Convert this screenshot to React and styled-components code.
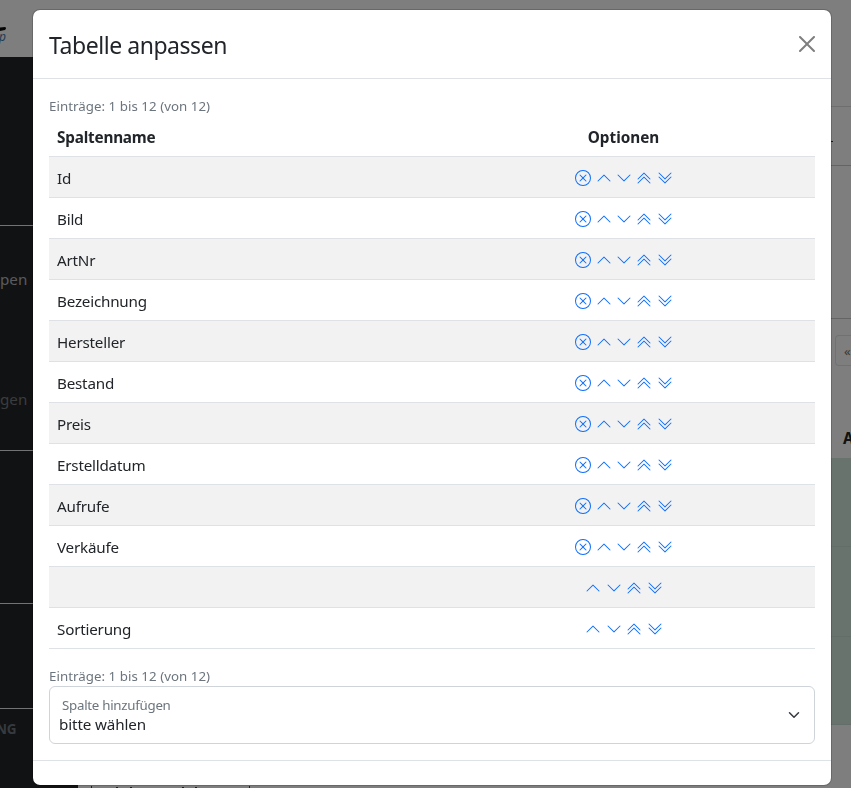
import React from 'react';
import styled, { createGlobalStyle } from 'styled-components';
import {
    BsXCircle,
    BsChevronUp,
    BsChevronDown,
    BsChevronDoubleUp,
    BsChevronDoubleDown,
} from 'react-icons/bs';

const Global = createGlobalStyle`
    *, *::before, *::after {
        box-sizing: border-box;
    }
    body {
        margin: 0;
        overflow: hidden;
        background: #fff;
        font-family: 'Noto Sans', 'Open Sans', sans-serif;
        font-size: 16px;
        line-height: 1.5;
        color: #212529;
    }
`;

/* ---- page behind the dialog ---- */

const Page = styled.div`
    display: flex;
    flex-direction: column;
    height: 788px;
    overflow: hidden;
`

const TopBar = styled.header`
    display: flex;
    height: 57px;
    padding-top: 26px;
    flex: none;
    background: #fcfcfe;
`

const Logo = styled.svg`
    width: 8px;
    height: 20px;
`

const Columns = styled.div`
    display: flex;
    flex: 1;
    min-height: 0;
`

const Sidebar = styled.nav`
    display: flex;
    flex-direction: column;
    width: 78px;
    flex: none;
    background: #222427;
`

const NavGroup = styled.div`
    height: ${props => props.$height}px;
    flex: none;
    padding-top: ${props => props.$top || 0}px;
    border-bottom: 1px solid ${props => props.$last ? 'transparent' : '#e3e6e9'};
`

const NavText = styled.div`
    height: 24px;
    margin-bottom: 96px;
    margin-left: ${props => props.$small ? -4 : 0}px;
    white-space: nowrap;
    font-size: ${props => props.$small ? 13.5 : 15.2}px;
    font-weight: ${props => props.$small ? 700 : 400};
    letter-spacing: ${props => props.$small ? -0.3 : 0}px;
    color: ${props => props.$color};
`

const Main = styled.main`
    display: flex;
    flex-direction: column;
    flex: 1;
    min-width: 0;
    background: #fcfcfd;
`

const Band = styled.div`
    display: flex;
    justify-content: flex-end;
    flex: none;
    height: ${props => props.$height}px;
    padding-top: ${props => props.$top || 0}px;
    background: ${props => props.$color || 'transparent'};
    border-bottom: 1px solid ${props => props.$line || 'transparent'};
`

const Dash = styled.span`
    width: 20px;
    height: 1px;
    background: linear-gradient(to right, #333 2px, transparent 2px);
`

const PageLink = styled.div`
    width: 16px;
    height: 31px;
    padding: 5px 0 0 8px;
    border: 1px solid #dee2e6;
    border-right: 0;
    border-radius: 4px 0 0 4px;
    font-size: 13px;
    line-height: 21px;
    color: #6c757d;
`

const HeadCell = styled.div`
    width: 8px;
    font-size: 15.3px;
    font-weight: 700;
`

const TabStrip = styled.div`
    display: flex;
    align-items: flex-end;
    width: 159px;
    height: 2px;
    margin: auto 0 0 13px;
    padding-left: 24px;
    border: solid #1d3f8f;
    border-width: 0 1px;
`

const Tick = styled.span`
    width: 2px;
    height: 1px;
    margin-right: ${props => props.$gap}px;
    background: #1d3f8f;
`

/* ---- dialog ---- */

const Backdrop = styled.div`
    position: fixed;
    inset: 0;
    display: flex;
    justify-content: center;
    align-items: flex-start;
    padding: 9px 0 0 13px;
    background: rgba(0, 0, 0, 0.5);
`

const Dialog = styled.section`
    width: 800px;
    flex: none;
    background: #fff;
    background-clip: padding-box;
    border: 1px solid rgba(0, 0, 0, 0.175);
    border-radius: 8px;
`

const DialogHeader = styled.header`
    display: flex;
    align-items: center;
    justify-content: space-between;
    height: 69px;
    padding: 16px;
    border-bottom: 1px solid #dee2e6;
`

const Title = styled.h1`
    margin: 0;
    padding-top: 2px;
    font-size: 23px;
    font-weight: 400;
    line-height: 36px;
    letter-spacing: -0.45px;
`

const CloseButton = styled.button`
    display: flex;
    padding: 0;
    border: 0;
    background: none;
    opacity: 0.5;
    cursor: pointer;
`

const DialogBody = styled.div`
    padding: 16px;
`

const DialogFooter = styled.footer`
    height: 25px;
    border-top: 1px solid #dee2e6;
`

const Count = styled.div`
    height: 21px;
    padding-top: 1px;
    font-size: 13.3px;
    line-height: 21px;
    letter-spacing: 0.04px;
    color: #6c757d;
`

const Table = styled.table`
    width: 100%;
    margin-bottom: 16px;
    border-collapse: separate;
    border-spacing: 0;
    table-layout: fixed;
`

const Th = styled.th`
    height: 41px;
    padding: 2px 8px 0;
    border-bottom: 1px solid #dee2e6;
    font-size: 15.3px;
    line-height: 24px;
    letter-spacing: ${props => props.$center ? 0 : -0.2}px;
    text-align: ${props => props.$center ? 'center' : 'left'};
`

const Td = styled.td`
    height: 41px;
    padding: 2px 8px 0;
    border-bottom: 1px solid #dee2e6;
    font-size: 15.2px;
    line-height: 24px;
    letter-spacing: -0.2px;
`

const Tr = styled.tr`
    &:nth-child(odd) {
        background: #f2f2f2;
    }
`

const Options = styled.div`
    display: flex;
    justify-content: center;
    gap: 4.4px;
    padding-left: 1px;
    color: #0d6efd;

    svg {
        width: 16px;
        height: 16px;
        cursor: pointer;
    }
`

const Select = styled.div`
    display: flex;
    align-items: center;
    justify-content: space-between;
    height: 58px;
    padding: 0 12px 0 9px;
    border: 1px solid #ced4da;
    border-radius: 6px;
`

const SelectLabel = styled.div`
    padding-left: 3px;
    font-size: 13.3px;
    line-height: 19px;
    letter-spacing: -0.27px;
    color: #6c757d;
`

const SelectValue = styled.div`
    padding-bottom: 1px;
    font-size: 15.2px;
    line-height: 19px;
    letter-spacing: -0.12px;
`

const columns = [
    'Id',
    'Bild',
    'ArtNr',
    'Bezeichnung',
    'Hersteller',
    'Bestand',
    'Preis',
    'Erstelldatum',
    'Aufrufe',
    'Verkäufe',
    '',
    'Sortierung',
];

// the last two columns are fixed and can only be moved
const removable = (index) => index < columns.length - 2;

const Background = () => (
    <Page>
        <TopBar>
            <Logo viewBox="0 0 8 20">
                <path d="M0 1.5 L5 1 Q7 2 5 4 L0 5 Z" fill="#0a0a0a" />
                <text x="-1" y="15" fontSize="12" fontStyle="italic" fill="#3a7aa8">p</text>
            </Logo>
        </TopBar>
        <Columns>
            <Sidebar>
                <NavGroup $height={169} />
                <NavGroup $height={225} $top={42}>
                    <NavText $color="#b4b6b8">pen</NavText>
                    <NavText $color="#75787b">gen</NavText>
                </NavGroup>
                <NavGroup $height={153} />
                <NavGroup $height={105} />
                <NavGroup $height={79} $top={10} $last>
                    <NavText $small $color="#6c757d">NG</NavText>
                </NavGroup>
            </Sidebar>
            <Main>
                <Band $height={50} $line="#dcdcde" />
                <Band $height={59} $top={34} $line="#c8c8ca"><Dash /></Band>
                <Band $height={153} $line="#c8c8ca" />
                <Band $height={93} $top={16}><PageLink>«</PageLink></Band>
                <Band $height={46} $top={15}><HeadCell>A</HeadCell></Band>
                <Band $height={89} $color="#d1e7dd" $line="#c7dbd2" />
                <Band $height={90} $color="#d1e7dd" $line="#c7dbd2" />
                <Band $height={88} $color="#d1e7dd" $line="#c7dbd2" />
                <TabStrip>
                    <Tick $gap={12} />
                    <Tick $gap={50} />
                    <Tick $gap={11} />
                    <Tick $gap={0} />
                </TabStrip>
            </Main>
        </Columns>
    </Page>
);

const App = () => {
    return (
        <>
            <Global />
            <Background />
            <Backdrop>
                <Dialog>
                    <DialogHeader>
                        <Title>Tabelle anpassen</Title>
                        <CloseButton aria-label="Schließen">
                            <svg width="16" height="16" viewBox="0 0 16 16">
                                <path
                                    d="M.293.293a1 1 0 0 1 1.414 0L8 6.586 14.293.293a1 1 0 1 1 1.414 1.414L9.414 8l6.293 6.293a1 1 0 0 1-1.414 1.414L8 9.414l-6.293 6.293a1 1 0 0 1-1.414-1.414L6.586 8 .293 1.707a1 1 0 0 1 0-1.414z"
                                />
                            </svg>
                        </CloseButton>
                    </DialogHeader>
                    <DialogBody>
                        <Count>Einträge: 1 bis 12 (von 12)</Count>
                        <Table>
                            <thead>
                                <tr>
                                    <Th>Spaltenname</Th>
                                    <Th $center>Optionen</Th>
                                </tr>
                            </thead>
                            <tbody>
                                {columns.map((name, index) => (
                                    <Tr key={index}>
                                        <Td>{name}</Td>
                                        <Td>
                                            <Options>
                                                {removable(index) && <BsXCircle />}
                                                <BsChevronUp />
                                                <BsChevronDown />
                                                <BsChevronDoubleUp />
                                                <BsChevronDoubleDown />
                                            </Options>
                                        </Td>
                                    </Tr>
                                ))}
                            </tbody>
                        </Table>
                        <Count>Einträge: 1 bis 12 (von 12)</Count>
                        <Select>
                            <div>
                                <SelectLabel>Spalte hinzufügen</SelectLabel>
                                <SelectValue>bitte wählen</SelectValue>
                            </div>
                            <svg width="16" height="12" viewBox="0 0 16 16">
                                <path d="m2 5 6 6 6-6" fill="none" stroke="#343a40" strokeWidth="2" strokeLinecap="round" strokeLinejoin="round" />
                            </svg>
                        </Select>
                    </DialogBody>
                    <DialogFooter />
                </Dialog>
            </Backdrop>
        </>
    );
};

export default App;
